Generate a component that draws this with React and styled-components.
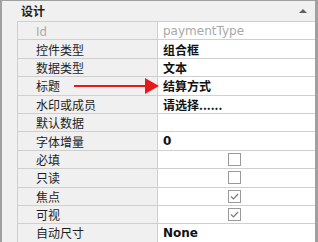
import React from 'react';
import styled, { createGlobalStyle } from 'styled-components';

const Global = createGlobalStyle`
  html, body { margin: 0; padding: 0; background: #f0f0f0; }
  body { font-family: "Noto Sans CJK SC", "DejaVu Sans", sans-serif; font-size: 12px; color: #1e1e1e; }
`;

const Panel = styled.div`
  position: relative;
  width: 318px;
  height: 242px;
  overflow: hidden;
  box-sizing: border-box;
  border-top: 1px solid #a0a0a0;
  border-left: 2px solid #a0a0a0;
  border-right: 3px solid #a0a0a0;
  background: #f0f0f0;
`;

const Category = styled.div`
  display: flex;
  align-items: center;
  justify-content: space-between;
  height: 20px;
  padding: 0 8px 0 19px;
  font-weight: bold;
  font-size: 12px;
  line-height: 20px;
`;

const Caret = styled.span`
  width: 0;
  height: 0;
  border-left: 4px solid transparent;
  border-right: 4px solid transparent;
  border-bottom: 4px solid #606060;
`;

const Grid = styled.div`
  margin-left: 15px;
  border-left: 1px solid #cfcfcf;
  border-top: 1px solid #cfcfcf;
`;

const Row = styled.div`
  display: grid;
  grid-template-columns: 140px 1fr;
  height: 18.4px;
  box-sizing: border-box;
  border-bottom: 1px solid #cfcfcf;
`;

const Label = styled.div`
  display: flex;
  align-items: center;
  padding-left: 18px;
  background: #f0f0f0;
  border-right: 1px solid #cfcfcf;
  color: ${p => (p.$muted ? '#a8a8a8' : '#1e1e1e')};
  white-space: nowrap;
`;

const Value = styled.div`
  display: flex;
  align-items: center;
  justify-content: ${p => (p.$center ? 'center' : 'flex-start')};
  padding-left: ${p => (p.$center ? '0' : '5px')};
  padding-right: ${p => (p.$center ? '4px' : '0')};
  background: #fff;
  font-weight: ${p => (p.$bold ? 'bold' : 'normal')};
  color: ${p => (p.$muted ? '#a8a8a8' : '#111')};
  font-family: ${p => (p.$latin ? '"DejaVu Sans", sans-serif' : 'inherit')};
  white-space: nowrap;
`;

const Box = styled.span`
  width: 11px;
  height: 11px;
  border: 1px solid #9a9a9a;
  background: #fff;
  display: flex;
  align-items: center;
  justify-content: center;
`;

const Arrow = styled.svg`
  position: absolute;
  left: 72px;
  top: 76px;
`;

const Check = ({ on }) => (
  <Box>
    {on && (
      <svg width="9" height="9" viewBox="0 0 9 9">
        <path d="M1 4.5 L3.5 7 L8 2" stroke="#7a7a7a" strokeWidth="1.2" fill="none" />
      </svg>
    )}
  </Box>
);

const rows = [
  { label: 'Id', value: 'paymentType', muted: true, latin: true },
  { label: '控件类型', value: '组合框', bold: true },
  { label: '数据类型', value: '文本', bold: true },
  { label: '标题', value: '结算方式', bold: true },
  { label: '水印或成员', value: '请选择......', bold: true },
  { label: '默认数据', value: '' },
  { label: '字体增量', value: '0', bold: true, latin: true },
  { label: '必填', check: false },
  { label: '只读', check: false },
  { label: '焦点', check: true },
  { label: '可视', check: true },
  { label: '自动尺寸', value: 'None', bold: true, latin: true },
];

export default function App() {
  return (
    <>
      <Global />
      <Panel>
        <Category>
          <span>设计</span>
          <Caret />
        </Category>
        <Grid>
          {rows.map(r => (
            <Row key={r.label}>
              <Label $muted={r.label === 'Id'}>{r.label}</Label>
              {r.check !== undefined ? (
                <Value $center>
                  <Check on={r.check} />
                </Value>
              ) : (
                <Value $bold={r.bold} $muted={r.muted} $latin={r.latin}>
                  {r.value}
                </Value>
              )}
            </Row>
          ))}
        </Grid>
        <Arrow width="86" height="18" viewBox="0 0 86 18">
          <line x1="0" y1="9" x2="73" y2="9" stroke="#e8191a" strokeWidth="2" />
          <polygon points="71,1 85,9 71,17" fill="#e8191a" />
        </Arrow>
      </Panel>
    </>
  );
}
